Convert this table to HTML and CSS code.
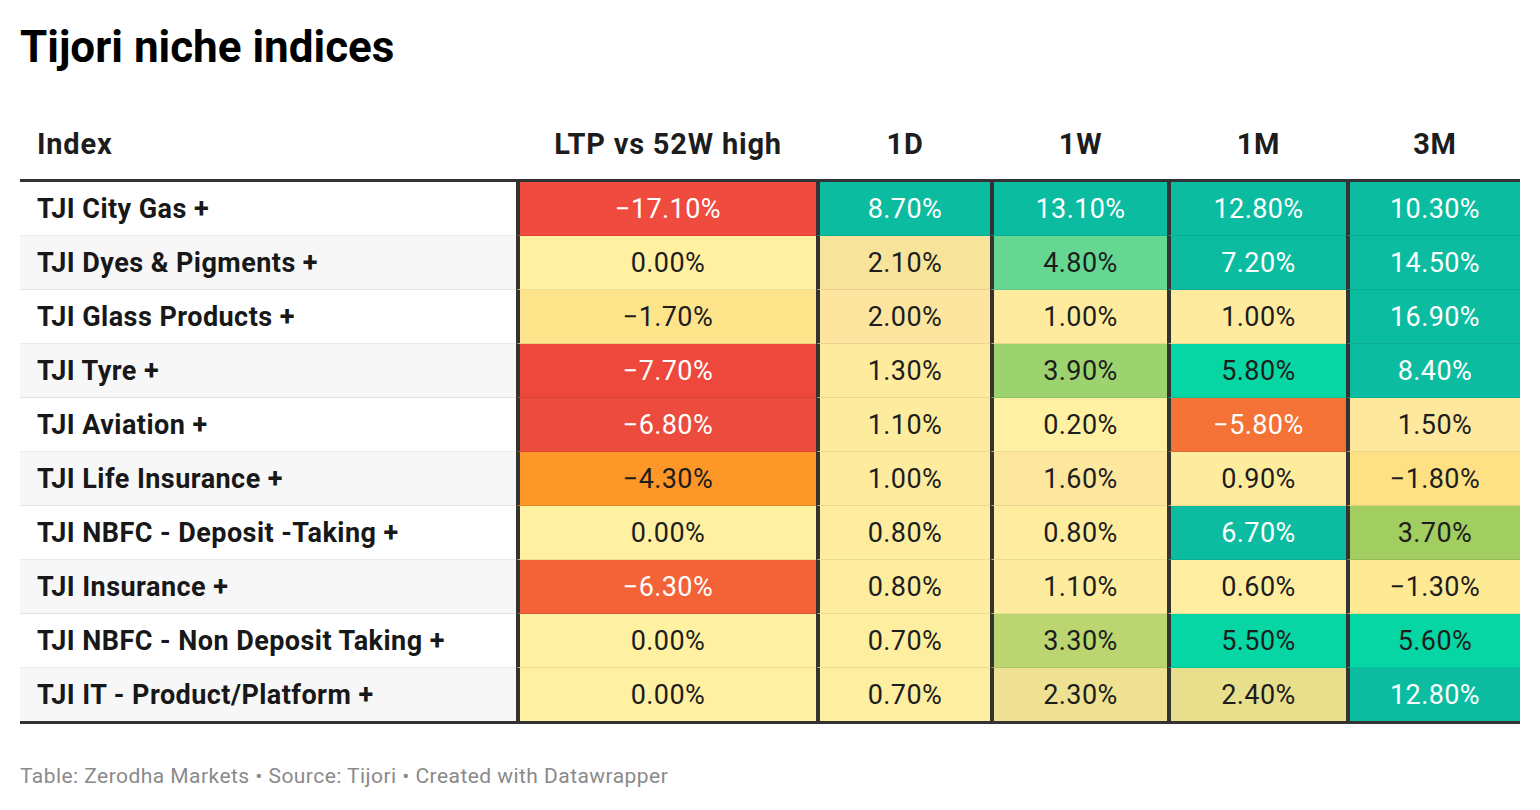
FILE: index.html
```html
<!DOCTYPE html>
<html lang="en">
<head>
<meta charset="utf-8">
<title>Tijori niche indices</title>
<link rel="stylesheet" href="styles.css">
</head>
<body>
<div class="chart">
  <h1 class="title">Tijori niche indices</h1>
  <div class="table">
    <div class="row head">
      <div class="th th-label">Index</div>
      <div class="th">LTP vs 52W high</div>
      <div class="th">1D</div>
      <div class="th">1W</div>
      <div class="th">1M</div>
      <div class="th">3M</div>
    </div>
    <div class="tbody">
      <div class="row">
        <div class="label">TJI City Gas +</div>
        <div class="v c-red1 lt">−17.10%</div>
        <div class="v c-teal lt">8.70%</div>
        <div class="v c-teal lt">13.10%</div>
        <div class="v c-teal lt">12.80%</div>
        <div class="v c-teal lt">10.30%</div>
      </div>
      <div class="row alt">
        <div class="label">TJI Dyes &amp; Pigments +</div>
        <div class="v c-y0">0.00%</div>
        <div class="v c-tan1">2.10%</div>
        <div class="v c-green1">4.80%</div>
        <div class="v c-teal lt">7.20%</div>
        <div class="v c-teal lt">14.50%</div>
      </div>
      <div class="row">
        <div class="label">TJI Glass Products +</div>
        <div class="v c-ym17">−1.70%</div>
        <div class="v c-tan2">2.00%</div>
        <div class="v c-y10">1.00%</div>
        <div class="v c-y10">1.00%</div>
        <div class="v c-teal lt">16.90%</div>
      </div>
      <div class="row alt">
        <div class="label">TJI Tyre +</div>
        <div class="v c-red2 lt">−7.70%</div>
        <div class="v c-y13">1.30%</div>
        <div class="v c-green2">3.90%</div>
        <div class="v c-aqua">5.80%</div>
        <div class="v c-teal lt">8.40%</div>
      </div>
      <div class="row">
        <div class="label">TJI Aviation +</div>
        <div class="v c-red3 lt">−6.80%</div>
        <div class="v c-y11">1.10%</div>
        <div class="v c-y02">0.20%</div>
        <div class="v c-orange1 lt">−5.80%</div>
        <div class="v c-y15">1.50%</div>
      </div>
      <div class="row alt">
        <div class="label">TJI Life Insurance +</div>
        <div class="v c-orange2">−4.30%</div>
        <div class="v c-y10">1.00%</div>
        <div class="v c-y16">1.60%</div>
        <div class="v c-y09">0.90%</div>
        <div class="v c-ym18">−1.80%</div>
      </div>
      <div class="row">
        <div class="label">TJI NBFC - Deposit -Taking +</div>
        <div class="v c-y0">0.00%</div>
        <div class="v c-y08">0.80%</div>
        <div class="v c-y08">0.80%</div>
        <div class="v c-teal lt">6.70%</div>
        <div class="v c-green3">3.70%</div>
      </div>
      <div class="row alt">
        <div class="label">TJI Insurance +</div>
        <div class="v c-red4 lt">−6.30%</div>
        <div class="v c-y08">0.80%</div>
        <div class="v c-y11">1.10%</div>
        <div class="v c-y06">0.60%</div>
        <div class="v c-ym13">−1.30%</div>
      </div>
      <div class="row">
        <div class="label">TJI NBFC - Non Deposit Taking +</div>
        <div class="v c-y0">0.00%</div>
        <div class="v c-y07">0.70%</div>
        <div class="v c-green4">3.30%</div>
        <div class="v c-aqua">5.50%</div>
        <div class="v c-aqua">5.60%</div>
      </div>
      <div class="row alt last">
        <div class="label">TJI IT - Product/Platform +</div>
        <div class="v c-y0">0.00%</div>
        <div class="v c-y07">0.70%</div>
        <div class="v c-olive1">2.30%</div>
        <div class="v c-olive2">2.40%</div>
        <div class="v c-teal lt">12.80%</div>
      </div>
    </div>
  </div>
  <p class="footer">Table: Zerodha Markets • Source: Tijori • Created with Datawrapper</p>
</div>
</body>
</html>
```
FILE: styles.css
```css
* { box-sizing: border-box; }
html, body { margin: 0; padding: 0; background: #ffffff; }
body {
  font-family: Roboto, "Liberation Sans", Arial, sans-serif;
  color: #181818;
}
.chart { padding: 21px 20px 0 20px; width: 1540px; }
.title {
  margin: 0;
  font-size: 44px;
  line-height: 52px;
  font-weight: 700;
  color: #000;
  letter-spacing: 0;
}
.table { width: 1500px; }
.row {
  display: grid;
  grid-template-columns: 496px 300px 174px 177px 179px 174px;
}
.th {
  padding: 54px 0 18px 4px;
  font-size: 29px;
  line-height: 34px;
  font-weight: 700;
  letter-spacing: 0.8px;
  text-align: center;
  color: #1d1d1d;
}
.th-label { text-align: left; padding-left: 17px; }
.tbody {
  border-top: 3px solid #333333;
  border-bottom: 3px solid #333333;
}
.tbody .row > div {
  height: 54px;
  border-bottom: 1px solid rgba(0, 0, 0, 0.08);
  display: flex;
  align-items: center;
}
.tbody .row.last > div { height: 53px; border-bottom: none; }
.label {
  padding-left: 17px;
  font-size: 27px;
  font-weight: 700;
  letter-spacing: 0.45px;
  background: #ffffff;
}
.row.alt .label { background: #f7f7f7; }
.v {
  justify-content: center;
  font-size: 27px;
  font-weight: 400;
  letter-spacing: 0.4px;
  border-left: 4px solid #333333;
  color: #1d1d1d;
}
.v.lt { color: #ffffff; }

.c-red1 { background: #ef4b3f; }
.c-red2 { background: #ee483c; }
.c-red3 { background: #ec4c3d; }
.c-red4 { background: #f46237; }
.c-orange1 { background: #f47236; }
.c-orange2 { background: #fd9728; }
.c-teal { background: #0cbca0; }
.c-aqua { background: #05d6a4; }
.c-green1 { background: #65d793; }
.c-green2 { background: #9cd36e; }
.c-green3 { background: #a2cd60; }
.c-green4 { background: #bbd670; }
.c-olive1 { background: #eee192; }
.c-olive2 { background: #e8df8c; }
.c-y0 { background: #fff1a1; }
.c-y02 { background: #fff1a1; }
.c-y06 { background: #ffeea0; }
.c-y07 { background: #feee9f; }
.c-y08 { background: #feed9f; }
.c-y09 { background: #feec9e; }
.c-y10 { background: #feeb9e; }
.c-y11 { background: #feec9e; }
.c-y13 { background: #feeb9e; }
.c-y15 { background: #fde89e; }
.c-y16 { background: #fde69e; }
.c-tan1 { background: #f8e39a; }
.c-tan2 { background: #fde5a0; }
.c-ym13 { background: #fee995; }
.c-ym17 { background: #fde48b; }
.c-ym18 { background: #fde183; }

.footer {
  margin: 40px 0 0 0;
  font-size: 21px;
  line-height: 25px;
  letter-spacing: 0.45px;
  color: #8a8a8a;
}
```
